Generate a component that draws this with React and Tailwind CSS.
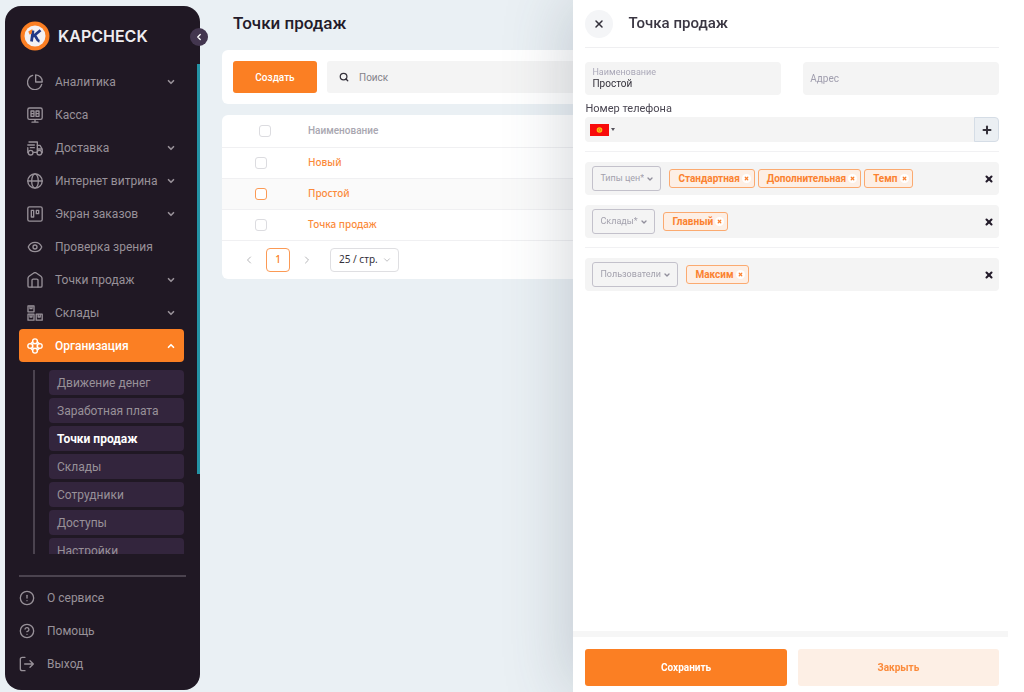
import React, { useState } from 'react';
import {
  ChevronDown,
  ChevronLeft,
  ChevronRight,
  ChevronUp,
  CircleAlert,
  CircleQuestionMark,
  Eye,
  Plus,
  Search,
  X,
} from 'lucide-react';

const MenuIcon = ({ children, ...props }) => (
  <svg
    viewBox="0 0 24 24"
    fill="none"
    stroke="currentColor"
    strokeWidth="2"
    strokeLinecap="round"
    strokeLinejoin="round"
    aria-hidden="true"
    {...props}
  >
    {children}
  </svg>
);

const ChartIcon = (props) => (
  <MenuIcon {...props}>
    <path d="M8.5 2.2A10.800 10.800 0 1 0 22 15.500" />
    <path d="M13 1.200V12h9.800A10 10 0 0 0 13 1.200z" />
  </MenuIcon>
);

const CashIcon = (props) => (
  <MenuIcon {...props}>
    <rect x="1.2" y="1.5" width="21.600" height="17" rx="2.500" />
    <path d="M12 19v3.500M7.500 22.800h9" />
    <path d="M6 6h4.500v8H6zM13.500 6H18v8h-4.500zM6 10h4.500M13.500 10H18" />
  </MenuIcon>
);

const DeliveryIcon = (props) => (
  <MenuIcon {...props}>
    <path d="M3 3h12.500v15.500H9.500M1.200 7.500H11M5 11.500h6M1.200 11.500V19" />
    <path d="M15.500 8h4l3.300 5.500V19M15.500 13.500h7" />
    <circle cx="5.500" cy="19" r="3.500" />
    <circle cx="18.500" cy="19" r="3.500" />
  </MenuIcon>
);

const GlobeIcon = (props) => (
  <MenuIcon {...props}>
    <circle cx="12" cy="12" r="10.800" />
    <ellipse cx="12" cy="12" rx="5" ry="10.800" />
    <path d="M1.200 12h21.600" />
  </MenuIcon>
);

const BoardIcon = (props) => (
  <MenuIcon {...props}>
    <rect x="1.200" y="1.200" width="21.600" height="21.600" rx="2.500" />
    <path d="M6.500 6.500h3.500v10H6.500zM14 6.500h3.500v5H14z" />
  </MenuIcon>
);

const StoreIcon = (props) => (
  <MenuIcon {...props}>
    <path d="M1.500 9.500a4 4 0 0 1 1.600-3.200l6.500-4.500a4 4 0 0 1 4.800 0l6.500 4.500a4 4 0 0 1 1.600 3.200V21a1.800 1.800 0 0 1-1.800 1.800H3.300A1.800 1.800 0 0 1 1.500 21z" />
    <path d="M7.500 22.500V12.500A1.800 1.800 0 0 1 9.300 10.700h5.400a1.800 1.800 0 0 1 1.800 1.800v10" />
  </MenuIcon>
);

const BoxesIcon = (props) => (
  <MenuIcon {...props}>
    <rect x="1.500" y="1.200" width="9" height="9" />
    <rect x="1.500" y="13.800" width="9" height="9" />
    <rect x="13.800" y="13.800" width="9" height="9" />
    <path d="M4.500 2v3.500h3V2M4.500 14.500V18h3v-3.500M16.800 14.500V18h3v-3.500" />
  </MenuIcon>
);

const OrgIcon = (props) => (
  <MenuIcon {...props}>
    <circle cx="12" cy="4.800" r="3.600" />
    <circle cx="12" cy="19.200" r="3.600" />
    <circle cx="4.800" cy="12" r="3.600" />
    <circle cx="19.200" cy="12" r="3.600" />
    <path d="M8.500 5.500 5.500 8.500M15.500 5.500l3 3M8.500 18.500l-3-3M15.500 18.500l3-3" />
    <rect x="8.500" y="8.500" width="7" height="7" rx="1" />
  </MenuIcon>
);

const ExitIcon = (props) => (
  <MenuIcon {...props}>
    <path d="M9 2H5a3 3 0 0 0-3 3v14a3 3 0 0 0 3 3h4M8.500 12H21.500M16.500 7l5 5-5 5" />
  </MenuIcon>
);

const Logo = () => (
  <svg viewBox="0 0 30 30" className="size-[30px]" aria-hidden="true">
    <circle cx="15" cy="15" r="14.500" fill="#fb7f23" />
    <circle cx="15" cy="15" r="10.500" fill="#f3f1f3" />
    <path d="M13 9.500 11.500 20.500M20.500 9.200l-7.500 6.300M14.500 14.500c2.500 1 1.500 5 5 5.800" fill="none" stroke="#233a86" strokeWidth="2.800" />
    <path d="M8.300 10.500 12.500 8l-1 5-2 .5z" fill="#fb7f23" />
  </svg>
);

const menu = [
  { label: 'Аналитика', icon: ChartIcon, nested: true },
  { label: 'Касса', icon: CashIcon },
  { label: 'Доставка', icon: DeliveryIcon, nested: true },
  { label: 'Интернет витрина', icon: GlobeIcon, nested: true },
  { label: 'Экран заказов', icon: BoardIcon, nested: true },
  { label: 'Проверка зрения', icon: Eye },
  { label: 'Точки продаж', icon: StoreIcon, nested: true },
  { label: 'Склады', icon: BoxesIcon, nested: true },
  { label: 'Организация', icon: OrgIcon, nested: true, open: true },
];

const submenu = ['Движение денег', 'Заработная плата', 'Точки продаж', 'Склады', 'Сотрудники', 'Доступы', 'Настройки'];

const footerLinks = [
  { label: 'О сервисе', icon: CircleAlert },
  { label: 'Помощь', icon: CircleQuestionMark },
  { label: 'Выход', icon: ExitIcon },
];

const rows = ['Новый', 'Простой', 'Точка продаж'];

const Sidebar = () => (
  <aside className="relative flex w-[195px] shrink-0 flex-col rounded-[16px] bg-[#201824] text-[#989199]">
    <div className="flex h-[59px] shrink-0 items-center gap-2 pl-[15px]">
      <Logo />
      <span className="font-['Inter'] text-base font-semibold text-[#eeecef]">KAPCHECK</span>
    </div>
    <button
      aria-label="Свернуть меню"
      className="absolute -right-2 top-[22px] z-10 flex size-[18px] items-center justify-center rounded-full bg-[#43364f] text-white"
    >
      <ChevronLeft className="size-[10px]" strokeWidth={3} />
    </button>
    {/* Scroll position marker */}
    <div className="absolute right-0 top-[58px] h-[60%] w-[3px] bg-[#2493a5]" />

    <nav className="flex min-h-0 flex-1 flex-col overflow-hidden pl-[14px] pr-4">
      {menu.map(({ label, icon: Icon, nested, open }) => (
        <a
          key={label}
          href="#"
          className={
            open
              ? 'flex h-[33px] shrink-0 items-center gap-3 rounded bg-[#fb7f23] px-2 text-[12px] font-medium text-white'
              : 'flex h-[33px] shrink-0 items-center gap-3 px-2 text-[12px]'
          }
        >
          <Icon className="size-4 shrink-0" strokeWidth={2} />
          <span className="min-w-0 flex-1 whitespace-nowrap">{label}</span>
          {nested &&
            (open ? (
              <ChevronUp className="-ml-3 size-[10px] shrink-0" strokeWidth={4} />
            ) : (
              <ChevronDown className="-ml-3 size-[10px] shrink-0" strokeWidth={4} />
            ))}
        </a>
      ))}
      <div className="mt-2 flex min-h-0 flex-1 overflow-hidden pl-[14px]">
        <div className="mr-[14px] w-[2px] bg-[#4b434f]" />
        <ul className="flex flex-1 flex-col gap-[3px]">
          {submenu.map((label) => (
            <li key={label} className="shrink-0">
              <a
                href="#"
                className={
                  label === 'Точки продаж'
                    ? 'flex h-[25px] items-center rounded bg-[#33253d] px-2 text-[12px] font-bold text-white'
                    : 'flex h-[25px] items-center rounded bg-[#33253d] px-2 text-[12px]'
                }
              >
                {label}
              </a>
            </li>
          ))}
        </ul>
      </div>
    </nav>

    <div className="mx-[14px] mt-[21px] border-t-2 border-[#4b434f] pb-[10px] pt-1">
      {footerLinks.map(({ label, icon: Icon }) => (
        <a key={label} href="#" className="flex h-[33px] items-center gap-3 text-[12px]">
          <Icon className="size-4" strokeWidth={2} />
          {label}
        </a>
      ))}
    </div>
  </aside>
);

const CheckBox = ({ label, active }) => (
  <input
    type="checkbox"
    aria-label={label}
    className={
      active
        ? 'block size-3 appearance-none rounded-[3px] border border-[#fb9a55] bg-white checked:bg-[#fb7f23]'
        : 'block size-3 appearance-none rounded-[3px] border border-[#dcdce0] bg-white checked:bg-[#fb7f23]'
    }
  />
);

const SalesPoints = () => (
  <main className="min-w-0 flex-1 pl-[22px]">
    <h1 className="flex h-9 items-center pl-[11px] text-[17px] font-medium text-[#231b2a]">Точки продаж</h1>

    <div className="mt-2 flex gap-[10px] rounded-md bg-white p-[11px]">
      <button className="h-8 w-[84px] shrink-0 rounded-[3px] bg-[#fb7f23] text-[10px] font-medium text-white">Создать</button>
      <div className="flex h-8 flex-1 items-center gap-[10px] rounded-[3px] bg-[#f4f4f4] px-3">
        <Search className="size-[10px] text-[#33303a]" strokeWidth={3} />
        <input
          type="search"
          aria-label="Поиск"
          placeholder="Поиск"
          className="h-5 min-w-0 flex-1 bg-transparent text-[10px] outline-none placeholder:text-[#85838a]"
        />
      </div>
    </div>

    <section className="mt-[11px] rounded-md bg-white">
      <table className="w-full border-collapse text-left">
        <thead>
          <tr className="h-8 border-b border-[#f0f0f2]">
            <th className="w-[86px] pl-[37px]">
              <CheckBox label="Выбрать все" />
            </th>
            <th className="text-[10px] font-medium text-[#a9a7b1]">Наименование</th>
          </tr>
        </thead>
        <tbody>
          {rows.map((name) => (
            <tr
              key={name}
              className={name === 'Простой' ? 'h-[31px] border-b border-[#f0f0f2] bg-[#fafafa]' : 'h-[31px] border-b border-[#f0f0f2]'}
            >
              <td className="pl-[33px]">
                <CheckBox label={name} active={name === 'Простой'} />
              </td>
              <td className="font-['Noto_Sans'] text-[10px] font-medium text-[#fb8a3a]">
                <a href="#">{name}</a>
              </td>
            </tr>
          ))}
        </tbody>
      </table>
      <div className="flex h-[38px] items-center pl-[21px] font-['Noto_Sans'] text-[10px]">
        <button aria-label="Предыдущая страница" className="text-[#b5b5b8]">
          <ChevronLeft className="size-3" />
        </button>
        <button className="ml-[11px] size-6 rounded border border-[#fb9a55] font-medium text-[#fb7f23]">1</button>
        <button aria-label="Следующая страница" className="ml-[11px] text-[#b5b5b8]">
          <ChevronRight className="size-3" />
        </button>
        <div className="relative ml-[17px]">
          <select
            aria-label="Строк на странице"
            className="block h-6 w-[69px] appearance-none rounded border border-[#dfdfe2] pl-2 text-[#33303a]"
          >
            <option>25 / стр.</option>
          </select>
          <ChevronDown className="pointer-events-none absolute right-[7px] top-[7px] size-[10px] text-[#b5b5b8]" />
        </div>
      </div>
    </section>
  </main>
);

const TagField = ({ label, initial }) => {
  const [tags, setTags] = useState(initial);

  return (
    <div className="flex min-h-[33px] items-center rounded bg-[#f4f4f4] px-[7px]">
      <div className="relative mr-2">
        <select
          aria-label={label}
          className="block h-[25px] appearance-none rounded-[3px] border border-[#c3c1cb] pl-[7px] pr-4 text-[9px] text-[#a3a1ad]"
        >
          <option>{label}</option>
        </select>
        <ChevronDown className="pointer-events-none absolute right-[7px] top-[9px] size-2 text-[#918f9c]" strokeWidth={4} />
      </div>
      <div className="flex flex-1 gap-[3px]">
        {tags.map((tag) => (
          <span
            key={tag}
            className="flex h-[19px] items-center gap-[2px] rounded-[3px] border border-[#fbaa70] bg-[#fdefe5] pl-2 pr-[3px] text-[10px] font-bold text-[#fb8230]"
          >
            {tag}
            <button
              aria-label={`Удалить ${tag}`}
              onClick={() => setTags(tags.filter((t) => t !== tag))}
              className="flex size-[9px] items-center justify-center rounded-full bg-white"
            >
              <X className="size-[5px]" strokeWidth={6} />
            </button>
          </span>
        ))}
      </div>
      <button aria-label={`Очистить ${label}`} onClick={() => setTags([])} className="-mr-[6px] p-1 text-[#231b2a]">
        <X className="size-[10px]" strokeWidth={5} />
      </button>
    </div>
  );
};

const Flag = () => (
  <svg viewBox="0 0 19 12" className="h-3 w-[19px]" aria-hidden="true">
    <rect width="19" height="12" fill="#f80a0a" />
    <circle cx="9.500" cy="6" r="2.800" fill="#f9c113" />
    <circle cx="9.500" cy="6" r="1.300" fill="none" stroke="#e8590c" strokeWidth=".6" />
  </svg>
);

const Drawer = () => (
  <div
    role="dialog"
    aria-label="Точка продаж"
    className="fixed inset-y-0 right-0 flex w-[44%] flex-col bg-white pr-4 shadow-[-6px_0_60px_rgba(60,75,90,0.22)]"
  >
    <div className="flex-1 overflow-hidden pl-3 pr-[9px]">
      <header className="flex h-12 items-center gap-[15px] border-b border-[#efeff1]">
        <button aria-label="Закрыть окно" className="flex size-7 items-center justify-center rounded-full bg-[#f4f5f7] text-[#33303a]">
          <X className="size-3" strokeWidth={3} />
        </button>
        <h2 className="text-[15px] font-medium text-[#3a3642]">Точка продаж</h2>
      </header>

      <div className="mt-[14px] grid grid-cols-2 gap-[22px]">
        <div className="flex h-[33px] flex-col justify-center rounded bg-[#f4f4f4] px-[7px]">
          <label htmlFor="name" className="text-[9px] leading-[10px] text-[#aaa8b8]">
            Наименование
          </label>
          <input id="name" defaultValue="Простой" className="h-[14px] w-full bg-transparent text-[10px] text-[#33303a] outline-none" />
        </div>
        <div className="flex h-[33px] items-center rounded bg-[#f4f4f4] px-[7px]">
          <input
            aria-label="Адрес"
            placeholder="Адрес"
            className="h-5 w-full bg-transparent text-[10px] outline-none placeholder:text-[#a09eae]"
          />
        </div>
      </div>

      <label htmlFor="phone" className="mt-[6px] block text-[11px] leading-4 text-[#4a4652]">
        Номер телефона
      </label>
      <div className="flex h-[25px] overflow-hidden rounded bg-[#f4f4f4]">
        <button aria-label="Код страны" aria-haspopup="listbox" className="flex items-center gap-[2px] px-[5px]">
          <Flag />
          <svg viewBox="0 0 4 3" className="h-[3px] w-1 text-[#55525c]" aria-hidden="true">
            <path d="M0 0h4L2 3z" fill="currentColor" />
          </svg>
        </button>
        <input id="phone" type="tel" className="min-w-0 flex-1 bg-transparent text-[10px] outline-none" />
        <button
          aria-label="Добавить телефон"
          className="flex w-[25px] items-center justify-center rounded-r border border-[#d5dde6] bg-[#ebeff3] text-[#33303a]"
        >
          <Plus className="size-3" strokeWidth={4} />
        </button>
      </div>

      <div className="mt-[9px] flex flex-col gap-[10px] border-t border-[#f1f1f3] pt-[10px]">
        <TagField label="Типы цен*" initial={['Стандартная', 'Дополнительная', 'Темп']} />
        <TagField label="Склады*" initial={['Главный']} />
      </div>
      <div className="mt-[9px] border-t border-[#f1f1f3] pt-[10px]">
        <TagField label="Пользователи" initial={['Максим']} />
      </div>
    </div>

    <footer className="grid grid-cols-2 gap-[11px] border-t-6 border-[#f6f6f6] pb-[6px] pl-3 pr-[9px] pt-3">
      <button className="h-[37px] rounded-[3px] bg-[#fb7f23] text-[10px] font-bold text-white">Сохранить</button>
      <button className="h-[37px] rounded-[3px] bg-[#fdefe5] text-[10px] font-bold text-[#fb8a3a]">Закрыть</button>
    </footer>
  </div>
);

export default function App() {
  return (
    <div className="flex h-screen overflow-hidden bg-[#eaf0f4] pb-[2px] pl-[5px] pt-[6px] font-['Roboto',sans-serif]">
      <Sidebar />
      <SalesPoints />
      <Drawer />
    </div>
  );
}
